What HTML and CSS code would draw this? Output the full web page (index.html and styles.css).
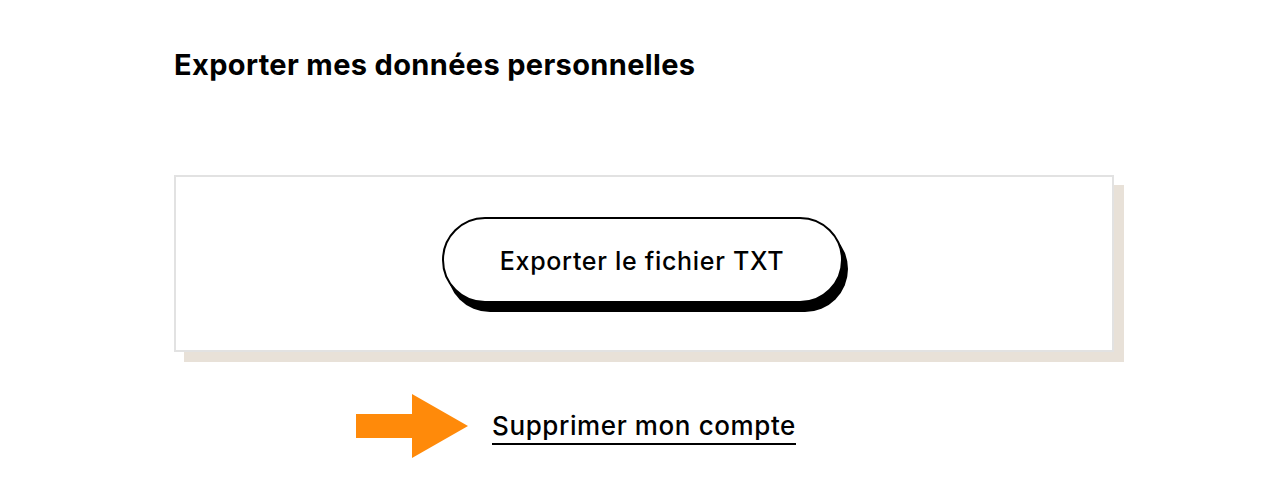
FILE: index.html
```html
<!DOCTYPE html>
<html lang="fr">
<head>
<meta charset="utf-8">
<title>Exporter mes données personnelles</title>
<link rel="stylesheet" href="styles.css">
</head>
<body>
<main class="page">
  <h2 class="title">Exporter mes données personnelles</h2>
  <section class="card">
    <button class="btn" type="button">Exporter le fichier TXT</button>
  </section>
  <div class="link-row">
    <a class="delete-link" href="#">
      <svg class="arrow" width="112" height="64" viewBox="0 0 112 64" aria-hidden="true">
        <polygon points="0,20 56,20 56,0 112,32 56,64 56,44 0,44" fill="#ff8a0a"/>
      </svg>
      Supprimer mon compte
    </a>
  </div>
</main>
</body>
</html>
```

FILE: styles.css
```css
* { box-sizing: border-box; }
html, body { margin: 0; padding: 0; background: #fff; }
body {
  font-family: Inter, "Open Sans", sans-serif;
  color: #000;
  width: 1284px;
  height: 490px;
  overflow: hidden;
}
.page {
  width: 950px;
  margin-left: 174px;
  padding-top: 45px;
}
.title {
  margin: 0;
  font-size: 29px;
  line-height: 40px;
  font-weight: 700;
  letter-spacing: 0.35px;
}
.card {
  margin-top: 90px;
  width: 940px;
  height: 177px;
  border: 2px solid #e2e2e2;
  background: #fff;
  box-shadow: 10px 10px 0 #e8e1d8;
  display: flex;
  align-items: center;
  justify-content: center;
  padding-bottom: 8px;
  padding-right: 4px;
}
.btn {
  width: 401px;
  height: 86px;
  padding-top: 4px;
  border: 2px solid #000;
  border-radius: 43px;
  background: #fff;
  box-shadow: 5px 9px 0 #000;
  font-family: inherit;
  font-size: 25px;
  font-weight: 500;
  letter-spacing: 0.7px;
  color: #000;
  cursor: pointer;
}
.link-row {
  width: 940px;
  display: flex;
  justify-content: center;
  margin-top: 59px;
}
.delete-link {
  position: relative;
  font-size: 26px;
  font-weight: 500;
  letter-spacing: 0.6px;
  color: #000;
  text-decoration: none;
  border-bottom: 2px solid #000;
  line-height: 30px;
  padding-bottom: 2px;
}
.arrow {
  position: absolute;
  left: -136px;
  top: -17px;
}
```
